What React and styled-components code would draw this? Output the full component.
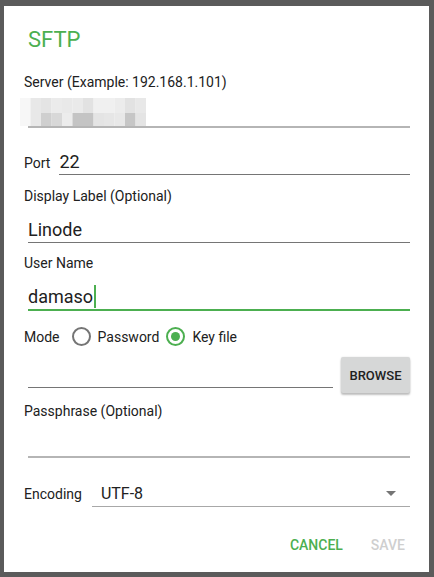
import React from "react";
import styled, { createGlobalStyle } from "styled-components";

const Global = createGlobalStyle`
  html, body { margin: 0; padding: 0; background: #5b5b5b; }
  body { font-family: Roboto, "Noto Sans", sans-serif; }
  * { box-sizing: border-box; }
`;

const Screen = styled.div`
  width: 434px;
  height: 577px;
  padding: 6px 5px 5px 4px;
  background: #5b5b5b;
`;

const Dialog = styled.div`
  width: 425px;
  height: 566px;
  background: #fff;
  display: flex;
  flex-direction: column;
  padding: 21px 19px 0 20px;
`;

const Title = styled.div`
  font-size: 22px;
  line-height: 26px;
  color: #4caf50;
  margin-left: 4px;
`;

const Label = styled.div`
  font-size: 14px;
  line-height: 18px;
  color: #212121;
  margin-top: ${(p) => p.$mt || 0}px;
  white-space: nowrap;
`;

const Field = styled.div`
  position: relative;
  display: flex;
  align-items: flex-end;
  margin-left: ${(p) => (p.$ml === undefined ? 4 : p.$ml)}px;
  margin-top: ${(p) => p.$mt || 0}px;
  height: ${(p) => p.$h}px;
  border-bottom: ${(p) => p.$bw || 1}px solid ${(p) => p.$line || "#757575"};
  flex: ${(p) => (p.$grow ? 1 : "none")};
  font-size: 18px;
  line-height: 24px;
  color: #212121;
`;

const Row = styled.div`
  display: flex;
  align-items: ${(p) => p.$align || "center"};
  margin-top: ${(p) => p.$mt || 0}px;
`;

const Cursor = styled.span`
  display: inline-block;
  width: 2px;
  height: 23px;
  background: #4caf50;
  margin-left: 1px;
  margin-bottom: 1px;
`;

const InputText = styled.span`
  display: flex;
  align-items: flex-end;
  padding-bottom: ${(p) => p.$pb || 0}px;
`;

const RadioGroup = styled.label`
  display: flex;
  align-items: center;
  margin-left: ${(p) => p.$ml}px;
  font-size: 14px;
  line-height: 18px;
  color: #212121;
`;

const RadioCircle = styled.span`
  width: 19px;
  height: 19px;
  border-radius: 50%;
  border: 2px solid ${(p) => (p.$on ? "#4caf50" : "#757575")};
  display: flex;
  align-items: center;
  justify-content: center;
  margin-right: 7px;
  &::after {
    content: "";
    display: ${(p) => (p.$on ? "block" : "none")};
    width: 9px;
    height: 9px;
    border-radius: 50%;
    background: #4caf50;
  }
`;

const RaisedButton = styled.button`
  width: 69px;
  height: 36px;
  margin-left: 8px;
  border: none;
  border-radius: 2px;
  background: #d6d7d7;
  box-shadow: 0 2px 2px rgba(0, 0, 0, 0.24), 0 0 2px rgba(0, 0, 0, 0.12);
  font-family: Roboto, sans-serif;
  font-weight: 500;
  font-size: 13px;
  color: #212121;
  padding: 0;
`;

const SelectText = styled.div`
  flex: 1;
  padding-left: 9px;
  font-size: 16px;
  line-height: 24px;
  color: #212121;
`;

const Caret = styled.span`
  width: 0;
  height: 0;
  border-left: 5px solid transparent;
  border-right: 5px solid transparent;
  border-top: 5px solid #757575;
  margin-right: 14px;
  margin-bottom: 10px;
`;

const Actions = styled.div`
  display: flex;
  justify-content: flex-end;
  margin-top: 21px;
  margin-right: -3px;
  gap: 12px;
`;

const FlatButton = styled.button`
  background: none;
  border: none;
  padding: 8px 8px;
  font-family: Roboto, sans-serif;
  font-weight: 500;
  font-size: 14px;
  line-height: 18px;
  color: ${(p) => (p.$disabled ? "#cfcfcf" : "#4caf50")};
`;

const mosaicTop = ["#f7f7f7", "#e8e8e8", "#e4e4e4", "#ebebeb", "#e9e9e9", "#eaeaea", "#e2e2e2", "#f0f0f0", "#f0f0f0", "#ececec", "#e2e2e2", "#e8e8e8"];
const mosaicBot = ["#f7f7f7", "#e8e8e8", "#cfcfcf", "#d8d8d8", "#ececec", "#c4c4c4", "#c4c4c4", "#e4e4e4", "#e6e6e6", "#e8e8e8", "#c6c6c6", "#e4e4e4"];

const Mosaic = () => (
  <svg width="126" height="28" viewBox="0 0 126 28" style={{ display: "block", marginLeft: -8 }}>
    {mosaicTop.map((c, i) => (
      <rect key={"t" + i} x={i * 10.5} y={0} width={10.6} height={15} fill={c} />
    ))}
    {mosaicBot.map((c, i) => (
      <rect key={"b" + i} x={i * 10.5} y={15} width={10.6} height={13} fill={c} />
    ))}
  </svg>
);

export default function App() {
  return (
    <>
      <Global />
      <Screen>
        <Dialog>
          <Title>SFTP</Title>

          <Label $mt={20}>Server (Example: 192.168.1.101)</Label>
          <Field $h={37} $line="#b5b5b5" $bw={2} $mt={0}>
            <Mosaic />
          </Field>

          <Row $mt={22}>
            <Label>Port</Label>
            <Field $grow $h={25} $ml={9}>
              <InputText>22</InputText>
            </Field>
          </Row>

          <Label $mt={12}>Display Label (Optional)</Label>
          <Field $h={38} $mt={0}>
            <InputText $pb={0}>Linode</InputText>
          </Field>

          <Label $mt={11}>User Name</Label>
          <Field $h={39} $line="#4caf50" $bw={2}>
            <InputText $pb={0}>
              damaso
              <Cursor />
            </InputText>
          </Field>

          <Row $mt={16}>
            <Label>Mode</Label>
            <RadioGroup $ml={12}>
              <RadioCircle />
              Password
            </RadioGroup>
            <RadioGroup $ml={7}>
              <RadioCircle $on />
              Key file
            </RadioGroup>
          </Row>

          <Row $align="flex-start" $mt={11}>
            <Field $grow $h={31} />
            <RaisedButton>BROWSE</RaisedButton>
          </Row>

          <Label $mt={9}>Passphrase (Optional)</Label>
          <Field $h={38} $line="#b5b5b5" $bw={2} />

          <Row $mt={22}>
            <Label>Encoding</Label>
            <Field $grow $h={27} $ml={10} $line="#a8a8a8">
              <SelectText>UTF-8</SelectText>
              <Caret />
            </Field>
          </Row>

          <Actions>
            <FlatButton>CANCEL</FlatButton>
            <FlatButton $disabled>SAVE</FlatButton>
          </Actions>
        </Dialog>
      </Screen>
    </>
  );
}
